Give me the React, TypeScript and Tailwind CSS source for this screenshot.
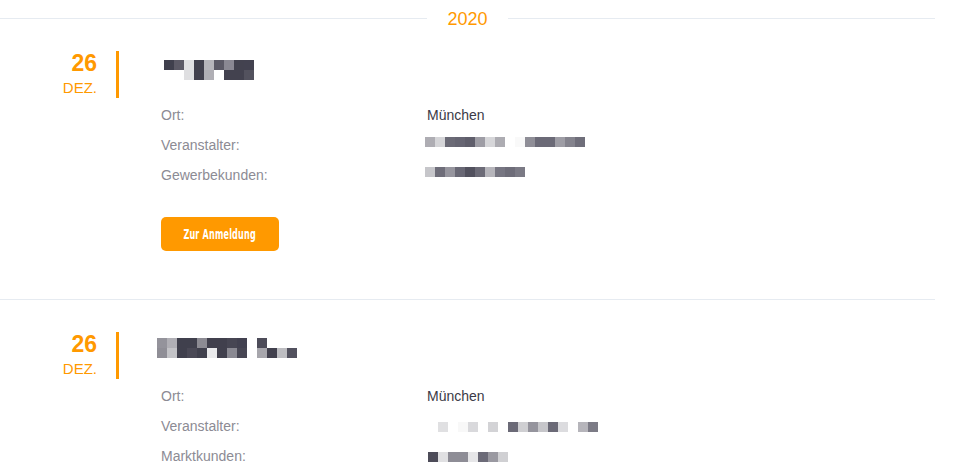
import React from "react";
import clsx from "clsx";

type Cell = string | null;

const W = "#ffffff00";

function Mosaic({ rows, className }: { rows: Cell[][]; className?: string }) {
  return (
    <div className={clsx("flex flex-col", className)}>
      {rows.map((row, i) => (
        <div key={i} className="flex">
          {row.map((c, j) => (
            <div key={j} className="h-[10px] w-[10px]" style={{ backgroundColor: c ?? W }} />
          ))}
        </div>
      ))}
    </div>
  );
}

type Row = { label: string; value?: string; mosaic?: Cell[][]; mosaicClass?: string };

type Entry = {
  day: string;
  month: string;
  title: Cell[][];
  titleClass: string;
  rows: Row[];
  top: string;
};

const entries: Entry[] = [
  {
    day: "26",
    month: "DEZ.",
    top: "pt-[14px]",
    titleClass: "mt-[9px] ml-[45px]",
    title: [
      ["#40404d", "#5c5a66", "#e0e0e2", "#41404d", "#b6b5bb", "#5b5966", "#8a8893", "#43424f", "#434250"],
      [null, null, "#dfdfe1", "#41404d", "#b0afb5", null, "#43424f", "#43424f", "#53525e"],
    ],
    rows: [
      { label: "Ort:", value: "München" },
      {
        label: "Veranstalter:",
        mosaicClass: "mt-[9px] -ml-[2px]",
        mosaic: [[
          "#aeadb3", "#d5d5d8", "#6b6a76", "#666572", "#5f5e6b", "#9e9da5", "#d6d6d9", "#adacb2", null,
          "#f9f9f9", "#8f8e97", "#6b6a77", "#6b6a77", "#9e9da5", "#84838d", "#6f6e7a",
        ]],
      },
      {
        label: "Gewerbekunden:",
        mosaicClass: "mt-[9px] -ml-[2px]",
        mosaic: [[
          "#c6c6ca", "#6e6d79", "#96959e", "#696875", "#52515e", "#6c6b77", "#b6b5bb", "#777682", "#6e6d79", "#7b7a85",
        ]],
      },
    ],
  },
  {
    day: "26",
    month: "DEZ.",
    top: "pt-[32px]",
    titleClass: "mt-[6px] ml-[38px]",
    title: [
      ["#94939b", "#b0afb5", "#40404d", "#40404d", "#8c8b93", "#41404d", "#41404d", "#474653", "#424150", null, "#4d4c59", null, null, null],
      ["#8f8e96", "#c3c3c7", "#40404d", "#4a4956", "#40404d", "#eaeaec", "#41404d", "#8a8992", "#474653", null, "#a7a6ac", "#41404d", "#bdbdc1", "#52515e"],
    ],
    rows: [
      { label: "Ort:", value: "München" },
      {
        label: "Veranstalter:",
        mosaicClass: "mt-[13px] ml-[11px]",
        mosaic: [[
          "#e0e0e2", null, "#f8f8f8", "#d9d9dc", null, "#d3d3d6", null, "#6b6a77", "#cfcfd2", "#95949d",
          "#c6c6ca", "#6b6a77", "#dcdcdf", null, "#b6b5bb", "#7c7b86",
        ]],
      },
      {
        label: "Marktkunden:",
        mosaicClass: "mt-[13px] ml-[1px]",
        mosaic: [[
          "#4d4c59", "#e0e0e2", "#8e8d96", "#8e8d96", "#e6e6e8", "#6c6b78", "#9a99a1", "#d0d0d3",
        ]],
      },
    ],
  },
];

function EventEntry({ entry, last }: { entry: Entry; last: boolean }) {
  return (
    <div className={clsx(entry.top, !last && "border-b border-[#e6ebf1] pb-[48px]")}>
      <div className="flex">
        <div className="flex h-[47px] w-[119px] flex-col items-end border-r-[3px] border-[#ff9900] pr-[19px] pt-px text-[#ff9900]">
          <span className="text-[23px] font-bold leading-[23px]">{entry.day}</span>
          <span className="mt-[5px] text-[15px] leading-[15px]">{entry.month}</span>
        </div>
        <Mosaic rows={entry.title} className={entry.titleClass} />
      </div>
      <div className="ml-[161px]">
        {entry.rows.map((r) => (
          <div key={r.label} className="flex h-[30px]">
            <div className="w-[266px] pt-[2px] text-[14px] leading-[30px] text-[#8c8b94]">{r.label}</div>
            {r.value ? (
              <div className="pt-[2px] text-[14px] leading-[30px] text-[#3b3a46]">{r.value}</div>
            ) : (
              <Mosaic rows={r.mosaic ?? []} className={r.mosaicClass} />
            )}
          </div>
        ))}
        {!last && (
          <button className="mt-[29px] flex h-[34px] w-[118px] items-center justify-center rounded-[5px] bg-[#ff9900] text-white">
            <span className="origin-center scale-x-[0.64] whitespace-nowrap text-[14px] font-bold tracking-[0.3px] font-['DejaVu_Sans_Condensed','DejaVu_Sans',sans-serif]">
              Zur Anmeldung
            </span>
          </button>
        )}
      </div>
    </div>
  );
}

export default function App() {
  return (
    <div className="h-[473px] w-[968px] overflow-hidden bg-white font-['Liberation_Sans',Arial,sans-serif]">
      <div className="w-[935px]">
        <div className="flex h-[37px] items-center">
          <div className="h-px flex-1 bg-[#e6ebf1]" />
          <span className="px-[20px] pt-px text-[18px] leading-none text-[#ff9900]">2020</span>
          <div className="h-px flex-1 bg-[#e6ebf1]" />
        </div>
        {entries.map((e, i) => (
          <EventEntry key={i} entry={e} last={i === entries.length - 1} />
        ))}
      </div>
    </div>
  );
}
